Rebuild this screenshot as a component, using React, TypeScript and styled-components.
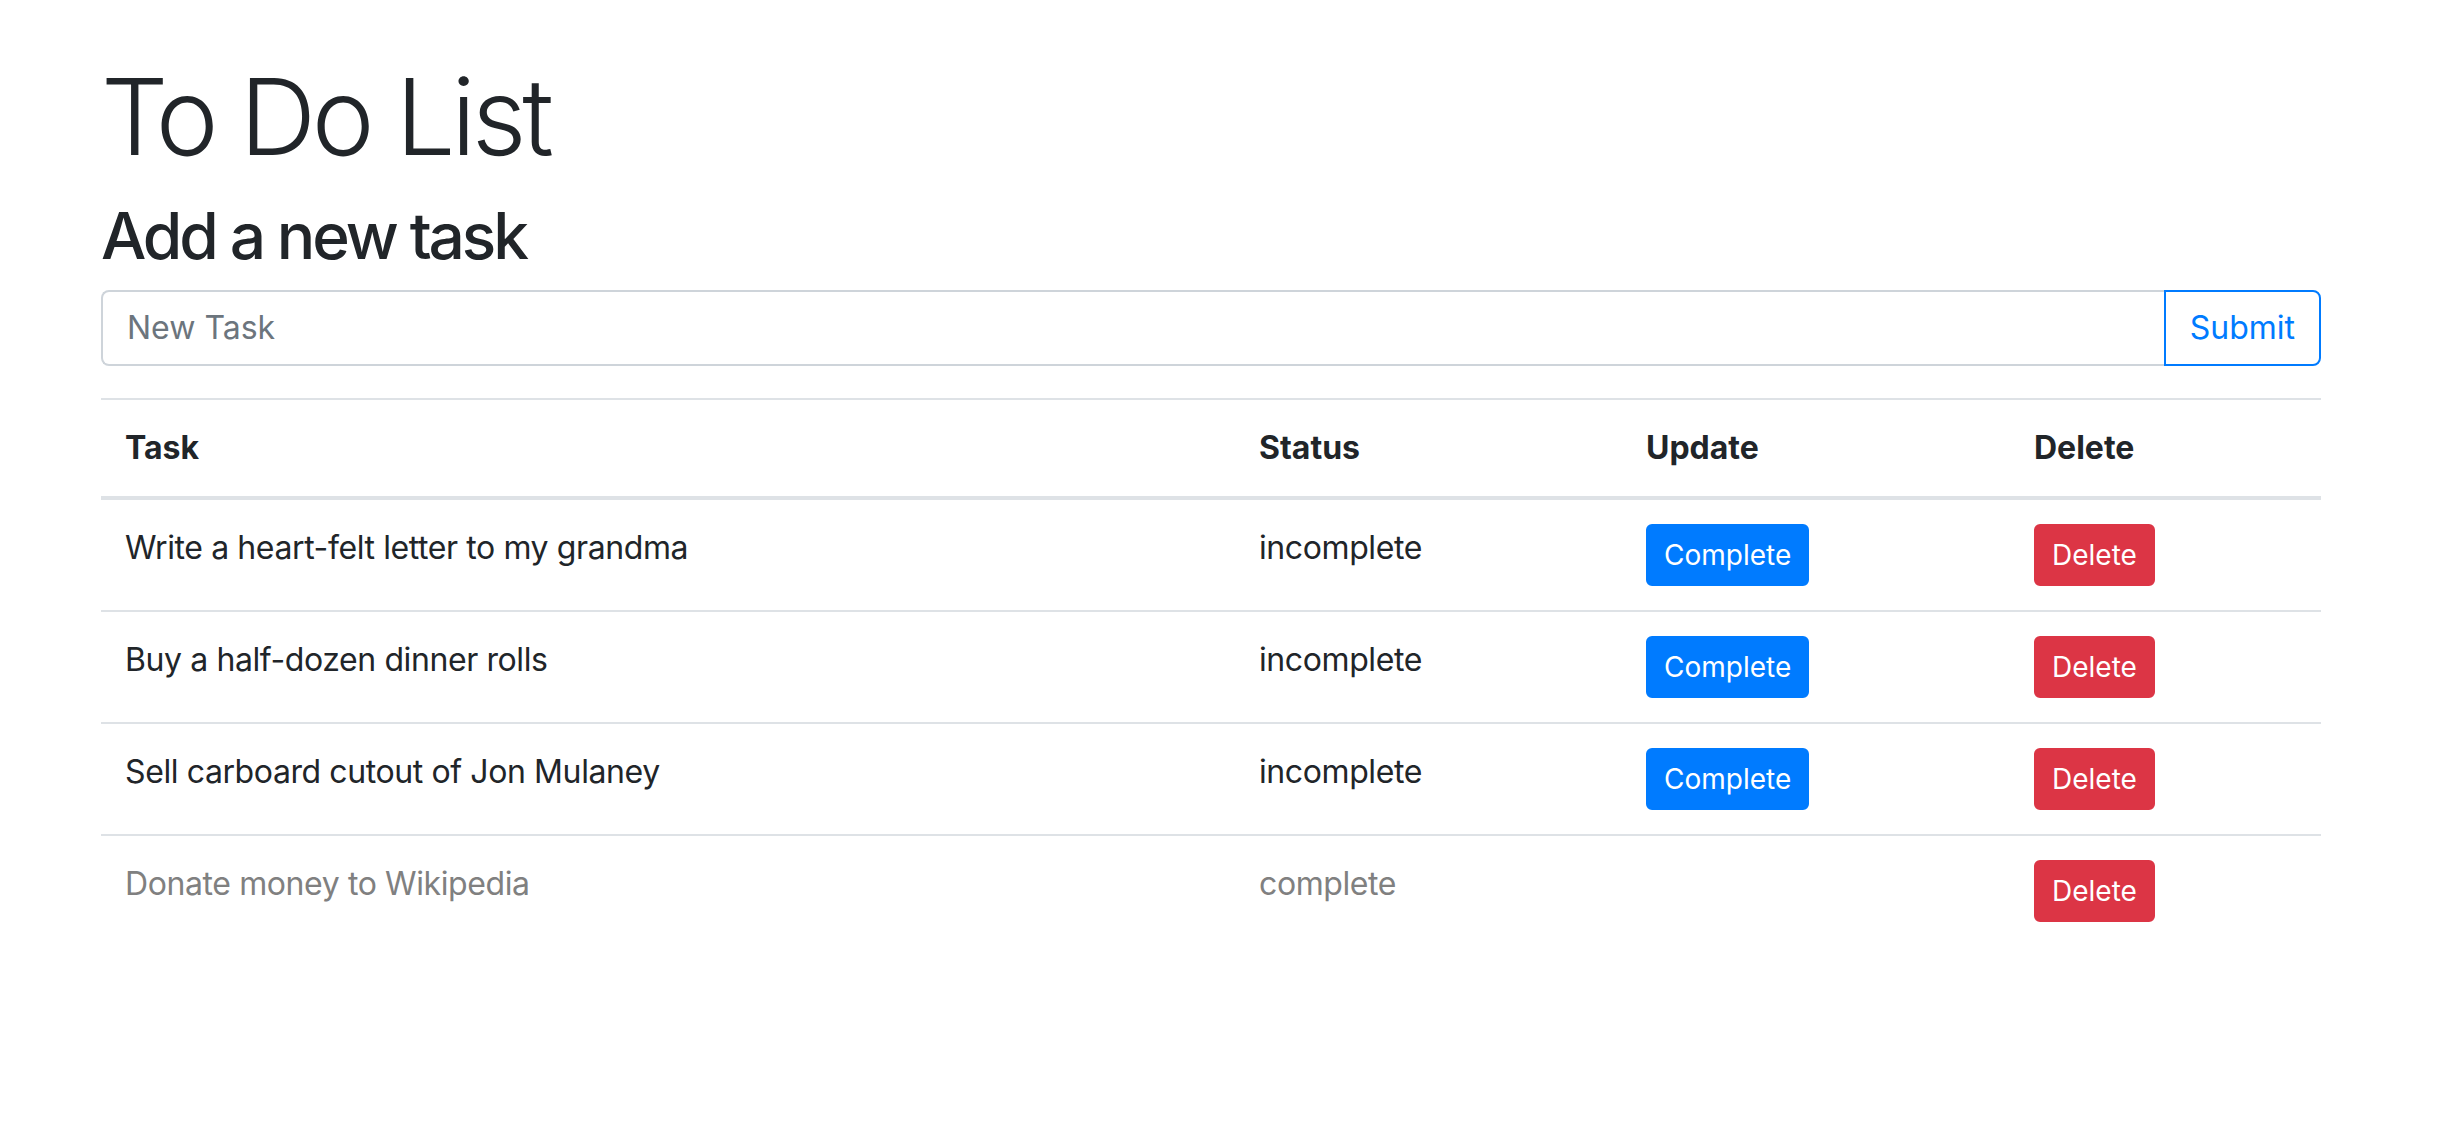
import React from "react";
import styled, { createGlobalStyle } from "styled-components";

const Global = createGlobalStyle`
  html, body { margin: 0; padding: 0; background: #fff; }
  body {
    font-family: Inter, "Noto Sans", sans-serif;
    font-size: 32px;
    line-height: 1.5;
    color: #212529;
  }
  * { box-sizing: border-box; }
`;

const Container = styled.div`
  width: 2220px;
  margin-left: 101px;
  padding-top: 53px;
`;

const Title = styled.h1`
  margin: 0 0 18px;
  font-size: 106px;
  font-weight: 300;
  line-height: 1.2;
  letter-spacing: -4.3px;
`;

const Subtitle = styled.h2`
  margin: 0 0 15px;
  font-size: 64px;
  font-weight: 500;
  line-height: 1.2;
  letter-spacing: -3.1px;
`;

const InputGroup = styled.form`
  display: flex;
  margin: 0 0 32px;
`;

const TextInput = styled.input`
  flex: 1;
  height: 76px;
  padding: 12px 24px;
  font: inherit;
  color: #495057;
  border: 2px solid #ced4da;
  border-right: none;
  border-radius: 8px 0 0 8px;
  outline: none;
  &::placeholder { color: #6c757d; }
`;

const OutlineButton = styled.button`
  height: 76px;
  padding: 12px 24px;
  font: inherit;
  color: #007bff;
  background: #fff;
  border: 2px solid #007bff;
  border-radius: 0 8px 8px 0;
  cursor: pointer;
`;

const Table = styled.table`
  width: 100%;
  border-collapse: collapse;
  table-layout: fixed;
`;

const Th = styled.th<{ $w: number }>`
  width: ${(p) => p.$w}px;
  text-align: left;
  font-weight: 700;
  padding: 24px;
  vertical-align: bottom;
  border-top: 2px solid #dee2e6;
  border-bottom: 4px solid #dee2e6;
`;

const Row = styled.tr<{ $done?: boolean }>`
  color: ${(p) => (p.$done ? "#808080" : "#212529")};
`;

const Td = styled.td`
  padding: 24px;
  vertical-align: top;
  border-top: 2px solid #dee2e6;
  letter-spacing: -0.4px;
`;

const SmallButton = styled.button<{ $variant: "primary" | "danger" }>`
  font-family: inherit;
  font-size: 28px;
  line-height: 1.5;
  padding: 8px 16px;
  color: #fff;
  background: ${(p) => (p.$variant === "primary" ? "#007bff" : "#dc3545")};
  border: 2px solid ${(p) => (p.$variant === "primary" ? "#007bff" : "#dc3545")};
  border-radius: 6px;
  cursor: pointer;
`;

const tasks = [
  { name: "Write a heart-felt letter to my grandma", done: false },
  { name: "Buy a half-dozen dinner rolls", done: false },
  { name: "Sell carboard cutout of Jon Mulaney", done: false },
  { name: "Donate money to Wikipedia", done: true },
];

export default function App() {
  return (
    <>
      <Global />
      <Container>
        <Title>To Do List</Title>
        <Subtitle>Add a new task</Subtitle>
        <InputGroup onSubmit={(e) => e.preventDefault()}>
          <TextInput placeholder="New Task" />
          <OutlineButton type="submit">Submit</OutlineButton>
        </InputGroup>
        <Table>
          <thead>
            <tr>
              <Th $w={1134}>Task</Th>
              <Th $w={387}>Status</Th>
              <Th $w={388}>Update</Th>
              <Th $w={311}>Delete</Th>
            </tr>
          </thead>
          <tbody>
            {tasks.map((t) => (
              <Row key={t.name} $done={t.done}>
                <Td>{t.name}</Td>
                <Td>{t.done ? "complete" : "incomplete"}</Td>
                <Td>{!t.done && <SmallButton $variant="primary">Complete</SmallButton>}</Td>
                <Td>
                  <SmallButton $variant="danger">Delete</SmallButton>
                </Td>
              </Row>
            ))}
          </tbody>
        </Table>
      </Container>
    </>
  );
}
